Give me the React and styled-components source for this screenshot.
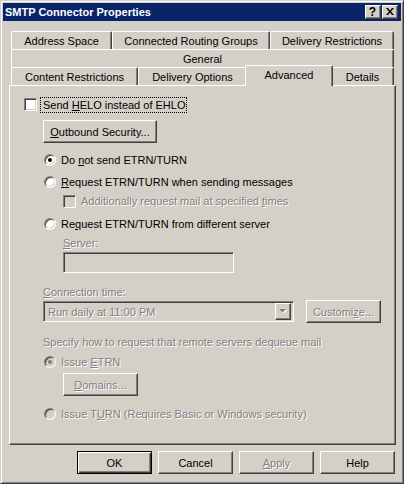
import React from "react";
import styled, { createGlobalStyle } from "styled-components";

const Global = createGlobalStyle`
    html, body {
        margin: 0;
        padding: 0;
        background: #d4d0c8;
    }
`;

const Window = styled.div`
    box-sizing: border-box;
    width: 404px;
    height: 484px;
    background: #d4d0c8;
    border: 1px solid;
    border-color: #d4d0c8 #404040 #404040 #d4d0c8;
    box-shadow: inset 1px 1px 0 #fff, inset -1px -1px 0 #808080;
    padding: 2px;
    display: flex;
    flex-direction: column;
    font-family: "Liberation Sans", Arial, sans-serif;
    font-size: 11px;
    color: #000;
`;

const TitleBar = styled.div`
    height: 18px;
    flex: none;
    background: #0a246a;
    color: #fff;
    font-weight: bold;
    display: flex;
    align-items: center;
    justify-content: space-between;
    padding: 0 3px 0 2px;
`;

const TitleButtons = styled.div`
    display: flex;
    gap: 1px;
`;

const TitleButton = styled.div`
    box-sizing: border-box;
    width: 16px;
    height: 14px;
    background: #d4d0c8;
    border: 1px solid;
    border-color: #fff #404040 #404040 #fff;
    box-shadow: inset -1px -1px 0 #808080;
    color: #000;
    font-size: 12px;
    font-weight: bold;
    display: flex;
    align-items: center;
    justify-content: center;
    padding: 0 1px 1px 0;
    line-height: 1;
`;

const Client = styled.div`
    flex: 1;
    padding: 10px 0 0 6px;
    display: flex;
    flex-direction: column;
`;

const TabStrip = styled.div`
    width: 387px;
    display: flex;
    flex-direction: column;
`;

const TabRow = styled.div`
    display: flex;
    height: 18px;
    margin: 0 2px;
`;

const Tab = styled.div`
    box-sizing: border-box;
    flex: 0 0 ${p => p.$w}px;
    height: 18px;
    background: #d4d0c8;
    border-top: 1px solid #fff;
    border-left: 1px solid #fff;
    border-right: 1px solid #404040;
    border-radius: 2px 2px 0 0;
    box-shadow: inset -1px 0 0 #808080;
    display: flex;
    justify-content: center;
    align-items: flex-start;
    padding-top: 2px;
    line-height: 14px;
    white-space: nowrap;
`;

const ActiveTab = styled(Tab)`
    flex-basis: ${p => p.$w + 4}px;
    height: 21px;
    margin: -2px -2px -1px;
    position: relative;
    z-index: 1;
`;

const Pane = styled.div`
    box-sizing: border-box;
    width: 387px;
    height: 360px;
    border: 1px solid;
    border-color: #fff #404040 #404040 #fff;
    box-shadow: inset -1px -1px 0 #808080;
    padding: 10px 0 0 14px;
    display: flex;
    flex-direction: column;
    align-items: flex-start;
`;

const Row = styled.div`
    display: flex;
    align-items: center;
    height: ${p => p.$h || 16}px;
    margin-top: ${p => p.$mt || 0}px;
    margin-left: ${p => p.$ml || 0}px;
    gap: ${p => p.$gap ?? 5}px;
    white-space: nowrap;
`;

const Label = styled.span`
    color: ${p => (p.$disabled ? "#808080" : "#000")};
    text-shadow: ${p => (p.$disabled ? "1px 1px 0 #fff" : "none")};
`;

const FocusLabel = styled(Label)`
    outline: 1px dotted #000;
    outline-offset: 0;
    padding: 1px 1px 1px 2px;
    line-height: 12px;
`;

const U = styled.span`
    text-decoration: underline;
`;

const Check = styled.span`
    box-sizing: border-box;
    flex: none;
    width: 13px;
    height: 13px;
    border: 1px solid;
    border-color: #808080 #fff #fff #808080;
    box-shadow: inset 1px 1px 0 #404040, inset -1px -1px 0 #d4d0c8;
    background: ${p => (p.$disabled ? "#d4d0c8" : "#fff")};
`;

const Radio = styled.span`
    box-sizing: border-box;
    flex: none;
    width: 12px;
    height: 12px;
    border-radius: 50%;
    border: 1px solid;
    border-color: #808080 #fff #fff #808080;
    box-shadow: inset 1px 1px 0 #404040, inset -1px -1px 0 #d4d0c8;
    background: ${p => (p.$disabled ? "#d4d0c8" : "#fff")};
    display: flex;
    align-items: center;
    justify-content: center;
    &::after {
        content: "";
        display: ${p => (p.$checked ? "block" : "none")};
        width: 4px;
        height: 4px;
        border-radius: 50%;
        background: ${p => (p.$disabled ? "#808080" : "#000")};
    }
`;

const Button = styled.div`
    box-sizing: border-box;
    flex: none;
    width: ${p => p.$w || 75}px;
    height: 23px;
    margin-top: ${p => p.$mt || 0}px;
    margin-left: ${p => p.$ml || 0}px;
    background: #d4d0c8;
    border: 1px solid;
    border-color: #fff #404040 #404040 #fff;
    box-shadow: inset -1px -1px 0 #808080;
    display: flex;
    align-items: center;
    justify-content: center;
    color: ${p => (p.$disabled ? "#808080" : "#000")};
    text-shadow: ${p => (p.$disabled ? "1px 1px 0 #fff" : "none")};
    white-space: nowrap;
`;

const DefaultButton = styled(Button)`
    border: 1px solid #000;
    box-shadow: inset 1px 1px 0 #fff, inset -1px -1px 0 #404040, inset -2px -2px 0 #808080;
`;

const Sunken = styled.div`
    box-sizing: border-box;
    flex: none;
    width: ${p => p.$w}px;
    height: 21px;
    margin-top: ${p => p.$mt || 0}px;
    margin-left: ${p => p.$ml || 0}px;
    border: 1px solid;
    border-color: #808080 #fff #fff #808080;
    box-shadow: inset 1px 1px 0 #404040, inset -1px -1px 0 #d4d0c8;
    background: #d4d0c8;
    display: flex;
    align-items: center;
    padding: 2px;
`;

const ComboText = styled.span`
    flex: 1;
    padding-left: 2px;
    color: #808080;
    text-shadow: 1px 1px 0 #fff;
`;

const DropButton = styled.div`
    box-sizing: border-box;
    width: 16px;
    height: 17px;
    border: 1px solid;
    border-color: #fff #404040 #404040 #fff;
    box-shadow: inset -1px -1px 0 #808080;
    display: flex;
    align-items: center;
    justify-content: center;
`;

const ButtonBar = styled.div`
    display: flex;
    justify-content: flex-end;
    gap: 6px;
    width: 386px;
    margin-top: 6px;
`;

const App = () => (
    <>
        <Global />
        <Window>
            <TitleBar>
                <span>SMTP Connector Properties</span>
                <TitleButtons>
                    <TitleButton>?</TitleButton>
                    <TitleButton>
                        <svg width="8" height="7" viewBox="0 0 8 7">
                            <path d="M0 0h2l2 2.5L6 0h2L5 3.5 8 7H6L4 4.5 2 7H0l3-3.5z" fill="#000" />
                        </svg>
                    </TitleButton>
                </TitleButtons>
            </TitleBar>
            <Client>
                <TabStrip>
                    <TabRow>
                        <Tab $w={101}>Address Space</Tab>
                        <Tab $w={158}>Connected Routing Groups</Tab>
                        <Tab $w={124}>Delivery Restrictions</Tab>
                    </TabRow>
                    <TabRow>
                        <Tab $w={383}>General</Tab>
                    </TabRow>
                    <TabRow>
                        <Tab $w={127}>Content Restrictions</Tab>
                        <Tab $w={109}>Delivery Options</Tab>
                        <ActiveTab $w={84}>Advanced</ActiveTab>
                        <Tab $w={63}>Details</Tab>
                    </TabRow>
                </TabStrip>
                <Pane>
                    <Row $h={17} $gap={4}>
                        <Check />
                        <FocusLabel>Send <U>H</U>ELO instead of EHLO</FocusLabel>
                    </Row>
                    <Button $w={114} $mt={7} $ml={19}>
                        <U>O</U>utbound Security...
                    </Button>
                    <Row $mt={9} $ml={20}>
                        <Radio $checked />
                        <Label>Do <U>n</U>ot send ETRN/TURN</Label>
                    </Row>
                    <Row $mt={6} $ml={20}>
                        <Radio />
                        <Label><U>R</U>equest ETRN/TURN when sending messages</Label>
                    </Row>
                    <Row $mt={3} $ml={39}>
                        <Check $disabled />
                        <Label $disabled>Additionally request mail at specified <U>t</U>imes</Label>
                    </Row>
                    <Row $mt={7} $ml={20}>
                        <Radio />
                        <Label>Re<U>q</U>uest ETRN/TURN from different server</Label>
                    </Row>
                    <Row $h={14} $mt={4} $ml={39}>
                        <Label $disabled><U>S</U>erver:</Label>
                    </Row>
                    <Sunken $w={171} $mt={2} $ml={39} />
                    <Row $h={14} $mt={12} $ml={19}>
                        <Label $disabled><U>C</U>onnection time:</Label>
                    </Row>
                    <Row $h={23} $mt={1} $ml={19} $gap={12}>
                        <Sunken $w={251}>
                            <ComboText>Run daily at 11:00 PM</ComboText>
                            <DropButton>
                                <svg width="8" height="5" viewBox="0 0 8 5">
                                    <path d="M1 1h7L4.5 4.5z" fill="#fff" />
                                    <path d="M0 0h7L3.5 3.5z" fill="#808080" />
                                </svg>
                            </DropButton>
                        </Sunken>
                        <Button $disabled>Customi<U>z</U>e...</Button>
                    </Row>
                    <Row $h={14} $mt={12} $ml={19}>
                        <Label $disabled>Specify how to request that remote servers dequeue mail</Label>
                    </Row>
                    <Row $mt={5} $ml={20}>
                        <Radio $checked $disabled />
                        <Label $disabled>Issue <U>E</U>TRN</Label>
                    </Row>
                    <Button $disabled $mt={3} $ml={39}>
                        <U>D</U>omains...
                    </Button>
                    <Row $mt={10} $ml={20}>
                        <Radio $disabled />
                        <Label $disabled>Issue T<U>U</U>RN (Requires Basic or Windows security)</Label>
                    </Row>
                </Pane>
                <ButtonBar>
                    <DefaultButton>OK</DefaultButton>
                    <Button>Cancel</Button>
                    <Button $disabled><U>A</U>pply</Button>
                    <Button>Help</Button>
                </ButtonBar>
            </Client>
        </Window>
    </>
);

export default App;
